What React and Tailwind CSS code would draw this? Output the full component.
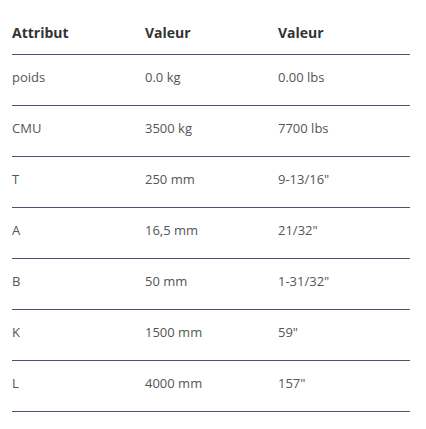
const rows = [
  ["poids", "0.0 kg", "0.00 lbs"],
  ["CMU", "3500 kg", "7700 lbs"],
  ["T", "250 mm", "9-13/16\""],
  ["A", "16,5 mm", "21/32\""],
  ["B", "50 mm", "1-31/32\""],
  ["K", "1500 mm", "59\""],
  ["L", "4000 mm", "157\""],
]

export default function App() {
  return (
    <div className="min-h-screen bg-white pl-3 font-['Open_Sans',sans-serif]">
      <table className="w-[398px] border-collapse text-left">
        <thead>
          <tr className="border-b border-[#4c5170]">
            <th className="w-[133px] pt-[23px] pb-[11px] text-[14px] leading-[20px] font-bold text-[#333333]">Attribut</th>
            <th className="w-[133px] pt-[23px] pb-[11px] text-[14px] leading-[20px] font-bold text-[#333333]">Valeur</th>
            <th className="pt-[23px] pb-[11px] text-[14px] leading-[20px] font-bold text-[#333333]">Valeur</th>
          </tr>
        </thead>
        <tbody>
          {rows.map((r) => (
            <tr key={r[0]} className="border-b border-[#4c5170]">
              {r.map((c, i) => (
                <td key={i} className="pt-[13px] pb-[19px] text-[13px] leading-[18px] text-[#555555]">{c}</td>
              ))}
            </tr>
          ))}
        </tbody>
      </table>
    </div>
  )
}
